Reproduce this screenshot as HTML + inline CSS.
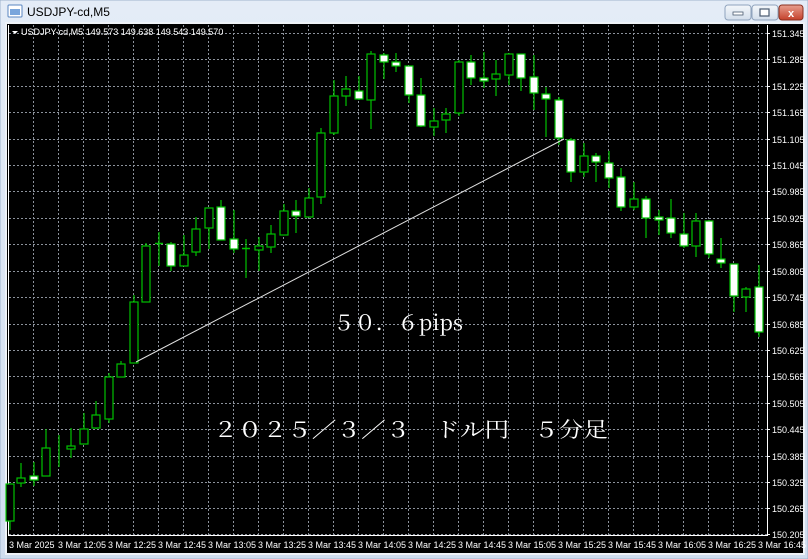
<!DOCTYPE html>
<html><head><meta charset="utf-8"><style>
html,body{margin:0;padding:0;width:808px;height:559px;overflow:hidden;background:#d6e2f0}
</style></head><body>
<svg width="808" height="559" viewBox="0 0 808 559" xmlns="http://www.w3.org/2000/svg" font-family="Liberation Sans, sans-serif">
<defs>
<linearGradient id="tb" x1="0" y1="0" x2="0" y2="1"><stop offset="0" stop-color="#e4ecf7"/><stop offset="1" stop-color="#cfdcee"/></linearGradient>
<linearGradient id="cl" x1="0" y1="0" x2="0" y2="1"><stop offset="0" stop-color="#e8a090"/><stop offset="1" stop-color="#c4402a"/></linearGradient>
<linearGradient id="bt" x1="0" y1="0" x2="0" y2="1"><stop offset="0" stop-color="#f4f7fb"/><stop offset="1" stop-color="#d3deeb"/></linearGradient>
</defs>
<rect width="808" height="559" fill="url(#tb)"/>
<rect x="0" y="0" width="808" height="559" fill="none" stroke="#9fb3cc"/>
<!-- icon -->
<rect x="8" y="5" width="14" height="12" rx="1" fill="#fff" stroke="#5a86c0"/>
<rect x="10" y="9" width="10" height="6" fill="#7aa6dc"/>
<text x="27" y="16" font-size="12" fill="#000">USDJPY-cd,M5</text>
<!-- buttons -->
<rect x="725" y="5" width="26" height="15" rx="3" fill="url(#bt)" stroke="#8fa3bd"/>
<rect x="733" y="12" width="10" height="3" fill="#fff" stroke="#4a5a70" stroke-width="0.8"/>
<rect x="752" y="5" width="26" height="15" rx="3" fill="url(#bt)" stroke="#8fa3bd"/>
<rect x="760" y="9" width="9" height="7" fill="#fff" stroke="#4a5a70" stroke-width="1.2"/>
<rect x="779" y="5" width="24" height="15" rx="3" fill="url(#cl)" stroke="#8a3020"/>
<text x="791" y="17" font-size="11" font-weight="bold" fill="#fff" text-anchor="middle">x</text>
<!-- chart area -->
<rect x="5" y="22" width="800" height="533" fill="#eef2f7"/>
<rect x="7" y="24" width="796" height="529" fill="#000"/>
<!-- grid -->
<g stroke="#8c929c" stroke-width="1" stroke-dasharray="2,2">
<path d="M33.5 25V535M58.5 25V535M83.5 25V535M108.5 25V535M133.5 25V535M158.5 25V535M183.5 25V535M208.5 25V535M233.5 25V535M258.5 25V535M283.5 25V535M308.5 25V535M333.5 25V535M358.5 25V535M383.5 25V535M408.5 25V535M433.5 25V535M458.5 25V535M483.5 25V535M508.5 25V535M533.5 25V535M558.5 25V535M583.5 25V535M608.5 25V535M633.5 25V535M658.5 25V535M683.5 25V535M708.5 25V535M733.5 25V535M758.5 25V535"/>
<path d="M9 33.5H767M9 59.5H767M9 86.5H767M9 112.5H767M9 139.5H767M9 165.5H767M9 191.5H767M9 218.5H767M9 244.5H767M9 271.5H767M9 297.5H767M9 324.5H767M9 350.5H767M9 376.5H767M9 403.5H767M9 429.5H767M9 456.5H767M9 482.5H767M9 508.5H767M9 534.5H767"/>
</g>
<!-- axes border -->
<path d="M8.5 25V535.5H767.5V25" fill="none" stroke="#fff" stroke-width="1"/>
<g stroke="#fff"><path d="M767 33.5h3M767 59.5h3M767 86.5h3M767 112.5h3M767 139.5h3M767 165.5h3M767 191.5h3M767 218.5h3M767 244.5h3M767 271.5h3M767 297.5h3M767 324.5h3M767 350.5h3M767 376.5h3M767 403.5h3M767 429.5h3M767 456.5h3M767 482.5h3M767 508.5h3M767 534.5h3"/></g>
<g font-size="9" fill="#fff">
<text x="772" y="37">151.345</text><text x="772" y="63">151.285</text><text x="772" y="90">151.225</text><text x="772" y="116">151.165</text><text x="772" y="143">151.105</text><text x="772" y="169">151.045</text><text x="772" y="195">150.985</text><text x="772" y="222">150.925</text><text x="772" y="248">150.865</text><text x="772" y="275">150.805</text><text x="772" y="301">150.745</text><text x="772" y="328">150.685</text><text x="772" y="354">150.625</text><text x="772" y="380">150.565</text><text x="772" y="407">150.505</text><text x="772" y="433">150.445</text><text x="772" y="460">150.385</text><text x="772" y="486">150.325</text><text x="772" y="512">150.265</text><text x="772" y="538">150.205</text>
<text x="9" y="548">3 Mar 2025</text>
<text x="58" y="548">3 Mar 12:05</text><text x="108" y="548">3 Mar 12:25</text><text x="158" y="548">3 Mar 12:45</text><text x="208" y="548">3 Mar 13:05</text><text x="258" y="548">3 Mar 13:25</text><text x="308" y="548">3 Mar 13:45</text><text x="358" y="548">3 Mar 14:05</text><text x="408" y="548">3 Mar 14:25</text><text x="458" y="548">3 Mar 14:45</text><text x="508" y="548">3 Mar 15:05</text><text x="558" y="548">3 Mar 15:25</text><text x="608" y="548">3 Mar 15:45</text><text x="658" y="548">3 Mar 16:05</text><text x="708" y="548">3 Mar 16:25</text><text x="758" y="548">3 Mar 16:45</text>
</g>
<path d="M12 31l3 3 3-3z" fill="#fff"/>
<text x="21" y="35" font-size="9" fill="#fff">USDJPY-cd,M5  149.573 149.638 149.543 149.570</text>
<!-- wicks -->
<g stroke="#00c000" stroke-width="1.2">
<path d="M10 484V530M21 463V487M34 462V486M46 429V476M59 435V467M71 428V458M84 413V444M96 401V429M109 373V423M121 361V377M134 295V363M146 243V302M159 232V266M171 242V271M184 235V266M196 217V256M209 208V249M221 200V240M234 210V253M246 239V278M259 237V271M271 225V253M284 204V235M296 200V233M309 188V217M321 128V204M334 80V135M346 76V106M359 76V100M371 51V129M384 53V79M396 53V72M409 66V103M421 78V127M434 108V136M446 108V133M459 60V116M471 55V85M484 52V88M496 60V96M509 53V85M521 54V91M534 55V110M546 87V137M559 97V145M571 138V182M584 143V177M596 153V182M609 151V188M621 168V211M634 182V210M646 196V238M659 210V235M671 199V238M684 213V248M696 213V257M709 220V258M721 238V268M734 264V312M746 287V312M759 265V337"/>
</g>
<!-- bull bodies -->
<g fill="#000" stroke="#00c000" stroke-width="1.2">
<rect x="6" y="484" width="8" height="37"/><rect x="17" y="478" width="8" height="5"/><rect x="42" y="448" width="8" height="28"/><rect x="67" y="446" width="8" height="3"/><rect x="80" y="429" width="8" height="15"/><rect x="92" y="415" width="8" height="13"/><rect x="105" y="377" width="8" height="42"/><rect x="117" y="364" width="8" height="13"/><rect x="130" y="302" width="8" height="61"/><rect x="142" y="246" width="8" height="56"/><rect x="180" y="255" width="8" height="11"/><rect x="192" y="229" width="8" height="23"/><rect x="205" y="208" width="8" height="20"/><rect x="255" y="246" width="8" height="4"/><rect x="267" y="234" width="8" height="13"/><rect x="280" y="211" width="8" height="24"/><rect x="305" y="198" width="8" height="19"/><rect x="317" y="133" width="8" height="64"/><rect x="330" y="96" width="8" height="37"/><rect x="342" y="89" width="8" height="7"/><rect x="367" y="54" width="8" height="46"/><rect x="430" y="121" width="8" height="6"/><rect x="442" y="114" width="8" height="6"/><rect x="455" y="62" width="8" height="51"/><rect x="492" y="74" width="8" height="5"/><rect x="505" y="54" width="8" height="21"/><rect x="580" y="156" width="8" height="16"/><rect x="630" y="199" width="8" height="8"/><rect x="692" y="221" width="8" height="25"/><rect x="742" y="289" width="8" height="8"/>
</g>
<path d="M155 243.5h8M242 248.5h8" stroke="#00c000" stroke-width="1.5"/>
<!-- bear bodies -->
<g fill="#fff" stroke="#00c000" stroke-width="1.2">
<rect x="30" y="476" width="8" height="4"/><rect x="167" y="244" width="8" height="22"/><rect x="217" y="207" width="8" height="33"/><rect x="230" y="239" width="8" height="10"/><rect x="292" y="211" width="8" height="5"/><rect x="355" y="91" width="8" height="8"/><rect x="380" y="55" width="8" height="7"/><rect x="392" y="62" width="8" height="4"/><rect x="405" y="66" width="8" height="29"/><rect x="417" y="95" width="8" height="31"/><rect x="467" y="62" width="8" height="16"/><rect x="480" y="78" width="8" height="3"/><rect x="517" y="54" width="8" height="24"/><rect x="530" y="77" width="8" height="16"/><rect x="542" y="94" width="8" height="5"/><rect x="555" y="100" width="8" height="38"/><rect x="567" y="140" width="8" height="32"/><rect x="592" y="156" width="8" height="6"/><rect x="605" y="163" width="8" height="15"/><rect x="617" y="177" width="8" height="30"/><rect x="642" y="199" width="8" height="19"/><rect x="655" y="217" width="8" height="3"/><rect x="667" y="218" width="8" height="15"/><rect x="680" y="234" width="8" height="12"/><rect x="705" y="221" width="8" height="33"/><rect x="717" y="259" width="8" height="4"/><rect x="730" y="264" width="8" height="32"/><rect x="755" y="287" width="8" height="45"/>
</g>
<!-- trend line -->
<line x1="136" y1="362" x2="564" y2="139" stroke="#e0e0e0" stroke-width="1"/>
<!-- labels -->
<g fill="#fff" font-family="Noto Serif CJK JP, Liberation Serif, serif" font-size="21">
<text x="333" y="330" textLength="130" lengthAdjust="spacingAndGlyphs">５０．６pips</text>
<text x="213" y="437" textLength="395" lengthAdjust="spacingAndGlyphs">２０２５／３／３　ドル円　５分足</text>
</g>
</svg>
</body></html>
